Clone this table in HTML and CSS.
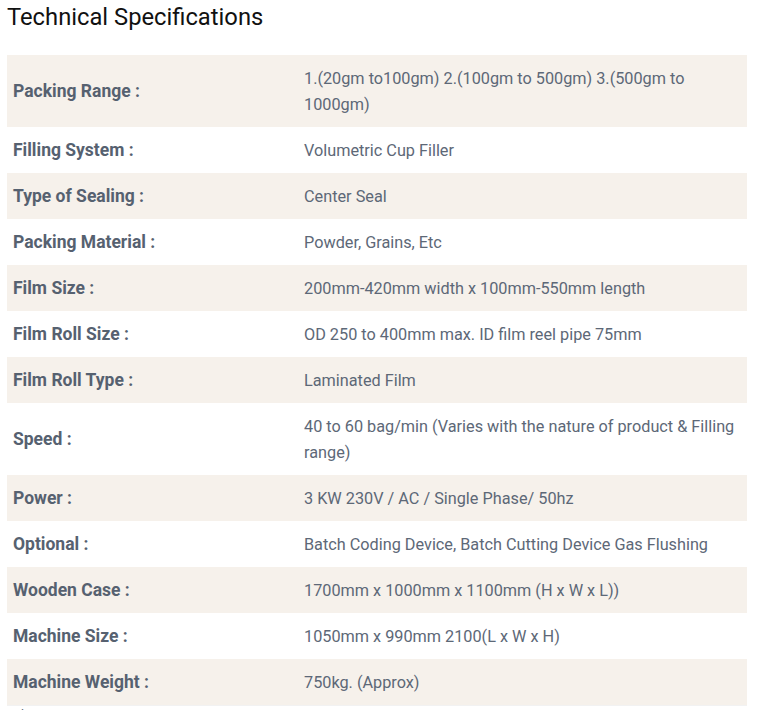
FILE: index.html
```html
<!DOCTYPE html>
<html>
<head>
<meta charset="utf-8">
<link rel="stylesheet" href="styles.css">
</head>
<body>
<div class="page">
  <h2 class="title">Technical Specifications</h2>
  <table class="specs">
    <tbody>
      <tr><th>Packing Range :</th><td>1.(20gm to100gm) 2.(100gm to 500gm) 3.(500gm to 1000gm)</td></tr>
      <tr><th>Filling System :</th><td>Volumetric Cup Filler</td></tr>
      <tr><th>Type of Sealing :</th><td>Center Seal</td></tr>
      <tr><th>Packing Material :</th><td>Powder, Grains, Etc</td></tr>
      <tr><th>Film Size :</th><td>200mm-420mm width x 100mm-550mm length</td></tr>
      <tr><th>Film Roll Size :</th><td>OD 250 to 400mm max. ID film reel pipe 75mm</td></tr>
      <tr><th>Film Roll Type :</th><td>Laminated Film</td></tr>
      <tr><th>Speed :</th><td>40 to 60 bag/min (Varies with the nature of product &amp; Filling range)</td></tr>
      <tr><th>Power :</th><td>3 KW 230V / AC / Single Phase/ 50hz</td></tr>
      <tr><th>Optional :</th><td>Batch Coding Device, Batch Cutting Device Gas Flushing</td></tr>
      <tr><th>Wooden Case :</th><td>1700mm x 1000mm x 1100mm (H x W x L))</td></tr>
      <tr><th>Machine Size :</th><td>1050mm x 990mm 2100(L x W x H)</td></tr>
      <tr><th>Machine Weight :</th><td>750kg. (Approx)</td></tr>
    </tbody>
  </table>
  <p class="after">*</p>
</div>
</body>
</html>
```
FILE: styles.css
```css
html, body {
  margin: 0;
  padding: 0;
  background: #ffffff;
}
.page {
  padding: 0 11px 0 7px;
  font-family: Roboto, "Liberation Sans", sans-serif;
}
.title {
  margin: 2px 0 0 0;
  font-size: 23.75px;
  font-weight: 400;
  line-height: 30px;
  color: #111111;
}
.specs {
  margin-top: 23px;
  width: 740px;
  border-collapse: collapse;
  border-bottom: 1px solid #f2f2f2;
  font-size: 16.25px;
  line-height: 26px;
  color: #5d6877;
}
.specs tr:nth-child(odd) {
  background: #f6f1eb;
}
.specs th {
  width: 279px;
  text-align: left;
  font-size: 17.5px;
  font-weight: 700;
  padding: 10px 6px;
  vertical-align: middle;
  color: #566170;
}
.specs td {
  padding: 11px 12px 9px 6px;
  vertical-align: middle;
}
.after {
  margin: 0;
  padding-left: 12px;
  font-size: 16px;
  line-height: 20px;
  color: #5d6877;
}
```
